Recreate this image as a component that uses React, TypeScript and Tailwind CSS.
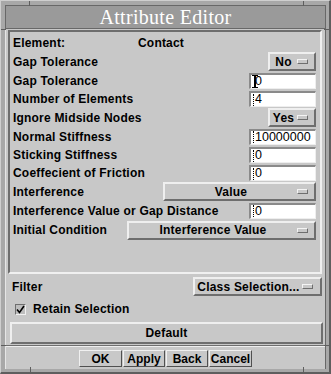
import React from 'react';

const raised2 =
  'border-2 border-t-[#efefef] border-l-[#efefef] border-b-[#6e6e6e] border-r-[#6e6e6e]';

function Indicator() {
  return (
    <span className="w-[11px] h-[5px] border border-t-[#f4f4f4] border-l-[#f4f4f4] border-b-[#6e6e6e] border-r-[#6e6e6e] bg-[#c8c8c8]" />
  );
}

function OptionButton({ label, width, pr = 'pr-[6px]' }: { label: string; width: string; pr?: string }) {
  return (
    <div className={`flex items-center h-[19px] bg-[#c8c8c8] ${raised2} ${width} ${pr}`}>
      <span className="flex-1 text-center font-bold text-[12px] tracking-[0.2px] leading-none">{label}</span>
      <Indicator />
    </div>
  );
}

function Field({ value, ibeam }: { value: string; ibeam?: boolean }) {
  return (
    <div className="relative flex items-center w-[67px] h-[16px] bg-white border-t-2 border-l-2 border-t-[#8a8a8a] border-l-[#8a8a8a] border-b border-r border-b-[#eeeeee] border-r-[#eeeeee] pl-[2px]">
      {!ibeam && <span className="h-[12px] border-l border-dotted border-black mr-[1px]" />}
      {ibeam && <span className="w-[1px] mr-[1px]" />}
      <span className="text-[12.5px] leading-none">{value}</span>
      {ibeam && (
        <span className="absolute left-[0px] top-[0px] w-[7px] h-[13px] flex flex-col items-center">
          <span className="w-[6px] h-px bg-black" />
          <span className="w-[2px] flex-1 bg-black" />
          <span className="w-[6px] h-px bg-black" />
        </span>
      )}
    </div>
  );
}

type Row = { label: string; h: string; control: React.ReactNode };

const rows: Row[] = [
  { label: 'Gap Tolerance', h: 'h-[19px]', control: <OptionButton label="No" width="w-[48px]" /> },
  { label: 'Gap Tolerance', h: 'h-[19px]', control: <Field value="0" ibeam /> },
  { label: 'Number of Elements', h: 'h-[18px]', control: <Field value="4" /> },
  { label: 'Ignore Midside Nodes', h: 'h-[19px]', control: <OptionButton label="Yes" width="w-[48px]" /> },
  { label: 'Normal Stiffness', h: 'h-[19px]', control: <Field value="10000000" /> },
  { label: 'Sticking Stiffness', h: 'h-[18px]', control: <Field value="0" /> },
  { label: 'Coeffecient of Friction', h: 'h-[18px]', control: <Field value="0" /> },
  { label: 'Interference', h: 'h-[19px]', control: <OptionButton label="Value" width="w-[153px]" /> },
  { label: 'Interference Value or Gap Distance', h: 'h-[19px]', control: <Field value="0" /> },
  { label: 'Initial Condition', h: 'h-[20px]', control: <OptionButton label="Interference Value" width="w-[189px]" /> },
];

const actions = [
  { label: 'OK', w: 'w-[43px]' },
  { label: 'Apply', w: 'w-[42px]' },
  { label: 'Back', w: 'w-[42px]' },
  { label: 'Cancel', w: 'w-[43px]' },
];

function Notch({ className }: { className: string }) {
  return <span className={`absolute bg-[#5e5e5e] ${className}`} />;
}

export default function App() {
  return (
    <div className="relative w-[331px] h-[374px] bg-[#a8a8a8] border-t border-l border-t-[#cfcfcf] border-l-[#cfcfcf] border-b-2 border-r-2 border-b-[#5e5e5e] border-r-[#5e5e5e] pt-[4px] pl-[4px] pr-[3px] pb-[3px] font-['Liberation_Sans',Arial,sans-serif] text-black">
      {/* frame resize notches */}
      <Notch className="left-[28px] top-0 w-px h-[5px]" />
      <Notch className="left-[302px] top-0 w-px h-[5px]" />
      <Notch className="left-0 top-[28px] w-[5px] h-px" />
      <Notch className="right-0 top-[28px] w-[5px] h-px" />
      <Notch className="left-0 top-[344px] w-[5px] h-px" />
      <Notch className="right-0 top-[344px] w-[5px] h-px" />
      <Notch className="left-[29px] bottom-0 w-px h-[5px]" />
      <Notch className="left-[302px] bottom-0 w-px h-[5px]" />

      <div className="flex flex-col h-full">
        {/* title bar */}
        <div className="h-[24px] bg-[#9a9a9a] border border-[#686868] flex items-center justify-center">
          <span className="text-white text-[20px] leading-none font-['Liberation_Serif',serif] tracking-[0.3px]">
            Attribute Editor
          </span>
        </div>

        {/* client area */}
        <div className="flex-1 flex flex-col bg-[#c8c8c8] border-l border-l-[#e6e6e6] border-r border-r-[#686868]">
          <div className="flex flex-col border-b border-b-[#6e6e6e]">
            {/* attribute panel */}
            <div className="mt-[1px] ml-[2px] w-[314px] h-[244px] border-2 border-t-[#6e6e6e] border-l-[#6e6e6e] border-b-[#f0f0f0] border-r-[#f0f0f0] pt-[1px] pl-[3px] pr-[4px] flex flex-col">
              <div className="h-[19px] flex items-center text-[12px] tracking-[0.2px] font-bold">
                <span className="w-[125px]">Element:</span>
                <span>Contact</span>
              </div>
              {rows.map((r, i) => (
                <div key={i} className={`${r.h} flex items-center justify-between`}>
                  <span className="text-[12px] tracking-[0.2px] font-bold leading-none whitespace-nowrap">{r.label}</span>
                  {r.control}
                </div>
              ))}
            </div>

            {/* filter */}
            <div className="mt-[3px] pl-[6px] pr-[3px] flex items-center justify-between">
              <span className="text-[12px] tracking-[0.2px] font-bold">Filter</span>
              <OptionButton label="Class Selection..." width="w-[129px]" pr="pr-[7px]" />
            </div>

            {/* retain selection */}
            <div className="h-[26px] flex items-center pl-[9px] gap-[7px]">
              <span className="w-[11px] h-[11px] bg-[#bdbdbd] border border-t-[#6e6e6e] border-l-[#6e6e6e] border-b-[#f0f0f0] border-r-[#f0f0f0] flex items-center justify-center">
                <svg width="9" height="9" viewBox="0 0 9 9">
                  <path d="M1 4.5 L3.5 7.5 L8 1" stroke="black" strokeWidth="1.6" fill="none" />
                </svg>
              </span>
              <span className="text-[12px] tracking-[0.2px] font-bold">Retain Selection</span>
            </div>

            {/* default */}
            <div className={`ml-[4px] mb-[1px] w-[313px] h-[22px] flex items-center justify-center ${raised2}`}>
              <span className="text-[12px] tracking-[0.2px] font-bold">Default</span>
            </div>
          </div>

          {/* action area */}
          <div className="flex-1 border-t border-t-[#eeeeee] flex items-center justify-center gap-[1px] pt-[1px]">
            {actions.map((b) => (
              <div
                key={b.label}
                className={`h-[17px] ${b.w} flex items-center justify-center border border-t-[#f0f0f0] border-l-[#f0f0f0] border-b-[#505050] border-r-[#505050]`}
              >
                <span className="text-[12px] font-bold leading-none">{b.label}</span>
              </div>
            ))}
          </div>
        </div>
      </div>
    </div>
  );
}
